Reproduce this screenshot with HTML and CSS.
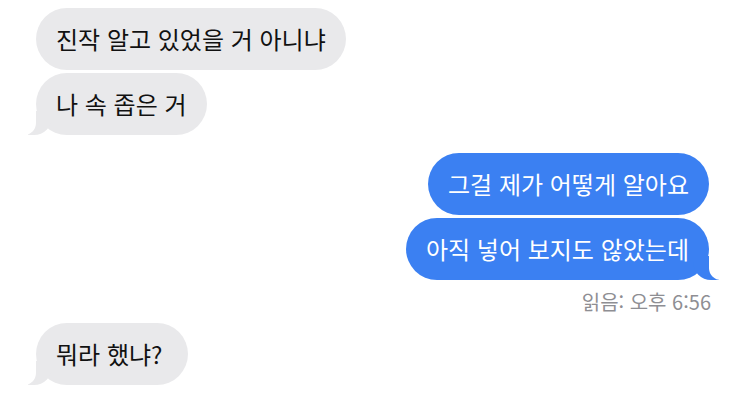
FILE: index.html
```html
<!DOCTYPE html>
<html lang="ko">
<head>
    <meta charset="UTF-8">
    <meta name="viewport" content="width=device-width, initial-scale=1.0">
    <title>메시지</title>
    <link rel="stylesheet" href="styles.css">
</head>
<body>
    <div class="chat">
        <div class="group received">
            <div class="bubble">진작 알고 있었을 거 아니냐</div>
            <div class="bubble last">나 속 좁은 거</div>
        </div>

        <div class="group sent">
            <div class="bubble">그걸 제가 어떻게 알아요</div>
            <div class="bubble last">아직 넣어 보지도 않았는데</div>
            <div class="receipt">읽음: 오후 6:56</div>
        </div>

        <div class="group received">
            <div class="bubble last short">뭐라 했냐?</div>
        </div>
    </div>
</body>
</html>
```

FILE: styles.css
```css
body {
    margin: 0;
    background: #fff;
    font-family: "Noto Sans CJK KR", "Noto Sans", sans-serif;
}

.chat {
    display: flex;
    flex-direction: column;
    gap: 18px;
    padding: 8px 39px 0 36px;
}

.group {
    display: flex;
    flex-direction: column;
    gap: 3px;
}

.received {
    align-items: flex-start;
}

.sent {
    align-items: flex-end;
    gap: 3px;
    margin-bottom: -11px;
}

.bubble {
    position: relative;
    padding: 15px 20px;
    font-size: 24px;
    line-height: 32px;
    border-radius: 31px;
    white-space: nowrap;
}

.received .bubble {
    background: #e9e9eb;
    color: #111;
}

.sent .bubble {
    background: #3b80f2;
    color: #fff;
}

/* tails */
.bubble.last::before,
.bubble.last::after {
    content: "";
    position: absolute;
    bottom: 0;
    height: 24px;
}

.received .bubble.last::before {
    left: -8px;
    width: 24px;
    background: #e9e9eb;
    border-bottom-right-radius: 18px;
}

.received .bubble.last::after {
    left: -14px;
    width: 14px;
    background: #fff;
    border-bottom-right-radius: 12px;
}

.sent .bubble.last::before {
    right: -10px;
    width: 26px;
    background: #3b80f2;
    border-bottom-left-radius: 18px;
}

.sent .bubble.last::after {
    right: -16px;
    width: 16px;
    background: #fff;
    border-bottom-left-radius: 12px;
}

.receipt {
    margin-top: 5px;
    margin-right: -2px;
    font-size: 20px;
    line-height: 28px;
    color: #8e8e93;
}

.short {
    padding-right: 26px;
}
```
